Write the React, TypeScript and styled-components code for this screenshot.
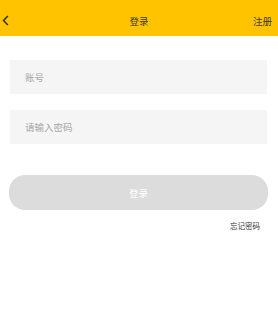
import React from "react";
import styled, { createGlobalStyle } from "styled-components";

const Global = createGlobalStyle`
  html, body { margin: 0; padding: 0; background: #fff; }
  body { font-family: "Noto Sans CJK SC", "Noto Sans", sans-serif; width: 278px; height: 331px; overflow: hidden; }
  * { box-sizing: border-box; }
`;

const Page = styled.div`
  display: flex;
  flex-direction: column;
  width: 278px;
  height: 331px;
  background: #fff;
`;

const Header = styled.header`
  height: 36px;
  background: #ffc300;
  display: grid;
  grid-template-columns: 40px 1fr 40px;
  align-items: center;
  padding-top: 6px;
`;

const Back = styled.button`
  border: none;
  background: none;
  padding: 0 0 0 2px;
  margin-top: -2px;
  display: flex;
  align-items: center;
  justify-self: start;
  height: 12px;
`;

const Title = styled.div`
  text-align: center;
  font-size: 9.5px;
  color: #3a3a3a;
`;

const Register = styled.div`
  text-align: right;
  padding-right: 6px;
  font-size: 9.5px;
  color: #3a3a3a;
`;

const Form = styled.div`
  display: flex;
  flex-direction: column;
  padding: 24px 11px 0 10px;
  gap: 16px;
`;

const Field = styled.input`
  height: 34px;
  border: none;
  outline: none;
  background: #f5f5f5;
  padding: 0 15px;
  font-family: "Noto Sans CJK SC", "Noto Sans", sans-serif;
  font-size: 9.5px;
  color: #333;
  &::placeholder { color: #a8a8a8; }
`;

const Submit = styled.button`
  margin: 31px 10px 0 9px;
  height: 35px;
  border: none;
  border-radius: 16px;
  background: #dcdcdc;
  color: #fff;
  font-family: "Noto Sans CJK SC", "Noto Sans", sans-serif;
  font-size: 9.5px;
`;

const Forgot = styled.div`
  align-self: flex-end;
  margin: 10px 18px 0 0;
  font-size: 7.5px;
  color: #333;
`;

export default function App() {
  return (
    <Page>
      <Global />
      <Header>
        <Back aria-label="back">
          <svg width="7" height="11" viewBox="0 0 7 11">
            <path d="M5.8 1 L1.6 5.5 L5.8 10" fill="none" stroke="#333" strokeWidth="1.6" />
          </svg>
        </Back>
        <Title>登录</Title>
        <Register>注册</Register>
      </Header>
      <Form>
        <Field placeholder="账号" />
        <Field placeholder="请输入密码" type="password" />
      </Form>
      <Submit>登录</Submit>
      <Forgot>忘记密码</Forgot>
    </Page>
  );
}
